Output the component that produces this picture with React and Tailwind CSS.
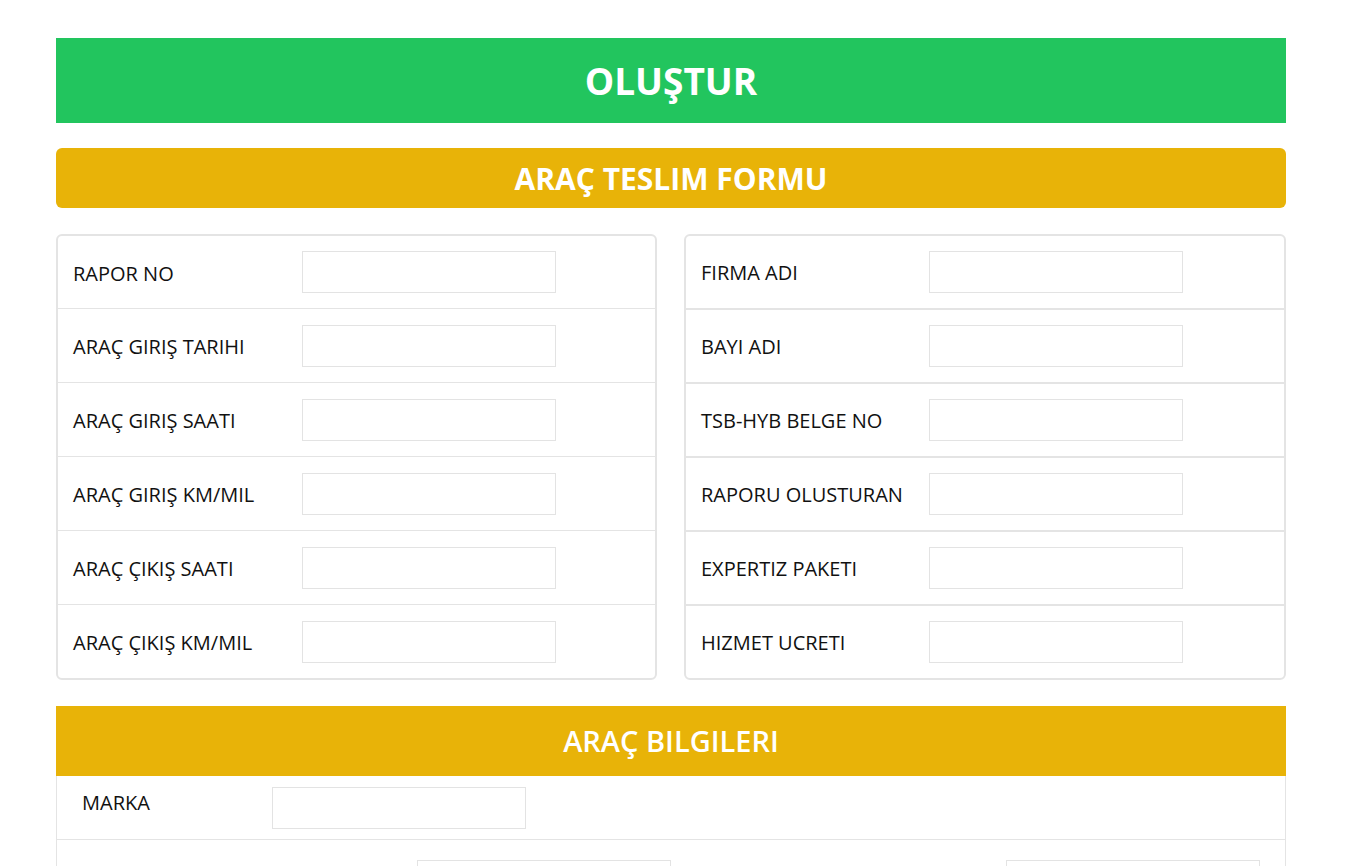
const LEFT_ROWS = [
  "RAPOR NO",
  "ARAÇ GIRIŞ TARIHI",
  "ARAÇ GIRIŞ SAATI",
  "ARAÇ GIRIŞ KM/MIL",
  "ARAÇ ÇIKIŞ SAATI",
  "ARAÇ ÇIKIŞ KM/MIL",
];

const RIGHT_ROWS = [
  "FIRMA ADI",
  "BAYI ADI",
  "TSB-HYB BELGE NO",
  "RAPORU OLUSTURAN",
  "EXPERTIZ PAKETI",
  "HIZMET UCRETI",
];

function FieldInput({ className = "" }) {
  return (
    <input
      type="text"
      className={`h-[42px] w-[254px] shrink-0 border border-[#e3e3e3] bg-white outline-none ${className}`}
    />
  );
}

function InfoCard({ rows, thick }) {
  return (
    <div className="rounded-md border-2 border-[#e4e4e4] bg-white">
      {rows.map((label, i) => (
        <div
          key={label}
          className={`flex items-center ${
            i === 0
              ? "h-[72px]"
              : thick
              ? "h-[74px] border-t-2 border-[#e4e4e4]"
              : "h-[74px] border-t border-[#e4e4e4]"
          }`}
        >
          <div
            className={`${thick ? "w-[227px] pt-[1px]" : "w-[228px] pt-[3px]"} pl-[15px] text-[20px] font-medium text-[#111]`}
          >
            {label}
          </div>
          <div className="px-4">
            <FieldInput />
          </div>
        </div>
      ))}
    </div>
  );
}

export default function App() {
  return (
    <div
      className="min-h-screen bg-white px-[56px] pt-[38px]"
      style={{ fontFamily: '"Open Sans", "Noto Sans", sans-serif' }}
    >
      <div className="w-[1230px]">
        {/* Create button bar */}
        <div className="flex h-[85px] items-center justify-center bg-[#22c55e]">
          <h1 className="text-[37px] font-bold text-white">OLUŞTUR</h1>
        </div>

        {/* Delivery form title */}
        <div className="mt-[25px] flex h-[60px] items-center justify-center rounded-md bg-[#e8b308]">
          <h2 className="text-[30px] font-bold text-white">ARAÇ TESLIM FORMU</h2>
        </div>

        {/* Two info cards */}
        <div className="mt-[26px] grid grid-cols-[601px_602px] justify-between">
          <InfoCard rows={LEFT_ROWS} />
          <InfoCard rows={RIGHT_ROWS} thick />
        </div>

        {/* Vehicle info */}
        <div className="mt-[26px] flex h-[70px] items-center justify-center bg-[#e8b308]">
          <h2 className="text-[29px] font-semibold text-white">ARAÇ BILGILERI</h2>
        </div>
        <div className="border-x border-[#e4e4e4]">
          <div className="flex h-[64px] items-center border-b border-[#e4e4e4]">
            <div className="-mt-[9px] w-[215px] pl-[25px] text-[20px] font-medium text-[#111]">
              MARKA
            </div>
            <FieldInput />
          </div>
          <div className="flex h-[84px] items-start border-b border-[#e4e4e4] pt-[20px]">
            <div className="w-[360px]" />
            <FieldInput />
            <div className="w-[335px]" />
            <FieldInput />
          </div>
        </div>
      </div>
    </div>
  );
}
